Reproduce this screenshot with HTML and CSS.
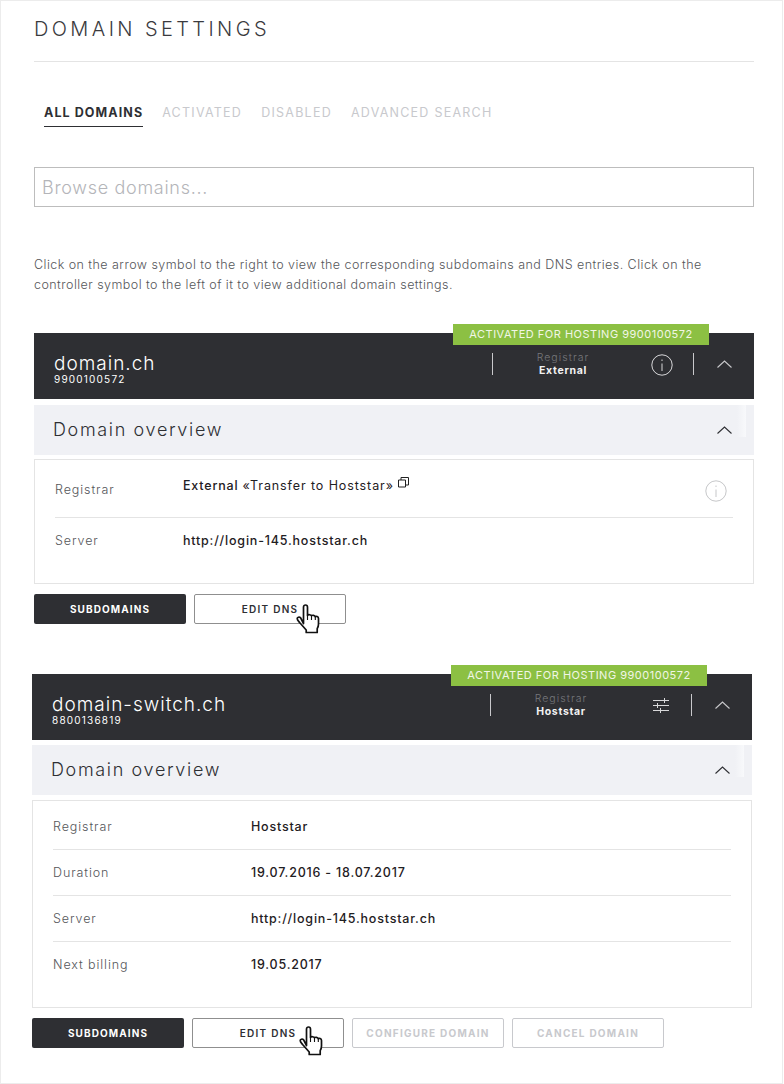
FILE: index.html
```html
<!DOCTYPE html>
<html lang="en">
<head>
<meta charset="utf-8">
<title>Domain settings</title>
<link rel="stylesheet" href="styles.css">
</head>
<body>
<svg width="0" height="0" class="defs">
  <symbol id="hand" viewBox="0 0 24 30">
    <path d="M7.5 19.5V3.2C7.5 1.9 8.4 1 9.5 1s2 .9 2 2.2V11.5c.4-1 3.6-1.2 4 .4.6-1 3.4-.9 3.8.8.8-.6 3.2-.4 3.2 1.8V20c0 2-.6 3.4-1.3 4.6V28.5H10.2V26L3.6 18.5C2.8 17.4 1.2 16.2 1.2 14.6c0-1.4 2-1.9 3.3-.9z" fill="#fff" stroke="#111" stroke-width="1.7" stroke-linejoin="round"/>
    <path d="M11.5 11.5V16M15.5 12V16M19.3 12.8V16" fill="none" stroke="#111" stroke-width="1.1"/>
  </symbol>
</svg>
<main class="page">
  <h1 class="title">DOMAIN SETTINGS</h1>
  <nav class="tabs">
    <a class="tab tab-active">ALL DOMAINS</a>
    <a class="tab">ACTIVATED</a>
    <a class="tab">DISABLED</a>
    <a class="tab">ADVANCED SEARCH</a>
  </nav>
  <div class="search">Browse domains...</div>
  <p class="intro">Click on the arrow symbol to the right to view the corresponding subdomains and DNS entries. Click on the controller symbol to the left of it to view additional domain settings.</p>

  <section class="card">
    <header class="card-head">
      <span class="tag">ACTIVATED FOR HOSTING 9900100572</span>
      <div class="domain"><div class="domain-name">domain.ch</div><div class="domain-id">9900100572</div></div>
      <div class="divider"></div>
      <div class="registrar"><div class="registrar-label">Registrar</div><div class="registrar-value">External</div></div>
      <div class="head-icon">
        <svg width="22" height="22" viewBox="0 0 22 22" fill="none" stroke="#d8d8da"><circle cx="11" cy="11" r="10.2"/><path d="M11 9.5V17M11 5.5V7"/></svg>
      </div>
      <div class="divider"></div>
      <svg class="chev" width="15" height="8" viewBox="0 0 15 8" fill="none" stroke="#c9c9cc" stroke-width="1.1"><path d="M.5 7.5L7.5 1l7 6.5"/></svg>
    </header>
    <div class="overview">
      <span class="overview-title">Domain overview</span>
      <svg class="chev" width="15" height="8" viewBox="0 0 15 8" fill="none" stroke="#2e2f33" stroke-width="1.1"><path d="M.5 7.5L7.5 1l7 6.5"/></svg>
      <span class="sheen"></span>
    </div>
    <div class="details details-short">
      <div class="row row-first">
        <span class="row-label">Registrar</span>
        <span class="row-value row-value-up">External <span class="row-link">«Transfer to Hoststar»</span><svg class="ext" width="11" height="11" viewBox="0 0 11 11" fill="none" stroke="#222"><path d="M.5 3h7v7h-7zM3 3V.5h7.5V8H8"/></svg></span>
        <svg class="row-info" width="22" height="22" viewBox="0 0 22 22" fill="none" stroke="#c6c7c9"><circle cx="11" cy="11" r="10.2"/><path d="M11 9.5V17M11 5.5V7"/></svg>
      </div>
      <div class="row row-last">
        <span class="row-label">Server</span>
        <span class="row-value">http://login-145.hoststar.ch</span>
      </div>
    </div>
    <div class="actions">
      <button class="btn btn-dark">SUBDOMAINS</button>
      <button class="btn btn-line">EDIT DNS<svg class="hand" width="24" height="30"><use href="#hand"/></svg></button>
    </div>
  </section>

  <section class="card card-second">
    <header class="card-head">
      <span class="tag">ACTIVATED FOR HOSTING 9900100572</span>
      <div class="domain"><div class="domain-name">domain-switch.ch</div><div class="domain-id">8800136819</div></div>
      <div class="divider"></div>
      <div class="registrar"><div class="registrar-label">Registrar</div><div class="registrar-value">Hoststar</div></div>
      <div class="head-icon">
        <svg class="sliders" width="16" height="15" viewBox="0 0 16 15" fill="none" stroke="#d8d8da"><path d="M0 2.5h16M0 7.5h16M0 12.5h16M11.5 0v5M4.5 5v5M7.5 10v5"/></svg>
      </div>
      <div class="divider"></div>
      <svg class="chev" width="15" height="8" viewBox="0 0 15 8" fill="none" stroke="#c9c9cc" stroke-width="1.1"><path d="M.5 7.5L7.5 1l7 6.5"/></svg>
    </header>
    <div class="overview">
      <span class="overview-title">Domain overview</span>
      <svg class="chev" width="15" height="8" viewBox="0 0 15 8" fill="none" stroke="#2e2f33" stroke-width="1.1"><path d="M.5 7.5L7.5 1l7 6.5"/></svg>
      <span class="sheen"></span>
    </div>
    <div class="details">
      <div class="row"><span class="row-label">Registrar</span><span class="row-value">Hoststar</span></div>
      <div class="row"><span class="row-label">Duration</span><span class="row-value">19.07.2016 - 18.07.2017</span></div>
      <div class="row"><span class="row-label">Server</span><span class="row-value">http://login-145.hoststar.ch</span></div>
      <div class="row"><span class="row-label">Next billing</span><span class="row-value">19.05.2017</span></div>
    </div>
    <div class="actions">
      <button class="btn btn-dark">SUBDOMAINS</button>
      <button class="btn btn-line">EDIT DNS<svg class="hand" width="24" height="30"><use href="#hand"/></svg></button>
      <button class="btn btn-off">CONFIGURE DOMAIN</button>
      <button class="btn btn-off">CANCEL DOMAIN</button>
    </div>
  </section>
</main>
</body>
</html>
```
FILE: styles.css
```css
* { box-sizing: border-box; }
html, body { margin: 0; padding: 0; background: #fff; }
body { font-family: Inter, "Liberation Sans", sans-serif; color: #2e2f33; }
.defs { position: absolute; }
.page { width: 783px; height: 1084px; padding: 0 28px 0 34px; border: 1px solid #ececec; overflow: hidden; }
.title { margin: 0 0 0 -1px; width: 720px; height: 61px; padding-top: 16px; border-bottom: 1px solid #e4e4e4; font-size: 20px; line-height: 24px; font-weight: 300; letter-spacing: 3.4px; color: #3a3a3e; }
.tabs { display: flex; gap: 19px; margin: 41px 0 0 9px; height: 24px; }
.tab { font-size: 12.5px; line-height: 20px; letter-spacing: 1.25px; color: #c8c9cd; height: 24px; }
.tab-active { font-weight: 700; letter-spacing: 1.08px; color: #2e2f33; border-bottom: 1px solid #2e2f33; }
.search { width: 720px; height: 40px; margin: 40px 0 0 -1px; border: 1px solid #bdbdbd; padding: 0 7px; font-size: 18px; line-height: 40px; font-weight: 300; letter-spacing: .7px; color: #b4b5b9; }
.intro { width: 700px; margin: 48px 0 0 -1px; font-size: 12.5px; line-height: 20px; font-weight: 300; letter-spacing: .45px; color: #55565a; }
.card { width: 720px; margin: 38px 0 0 -1px; }
.card-second { margin: 50px 0 0 -3px; }
.card-head { position: relative; display: flex; align-items: center; height: 66px; padding-left: 20px; background: #2e2f33; color: #fff; }
.tag { position: absolute; top: -9px; right: 45px; width: 256px; height: 21px; background: #8cc043; color: #f1f6e6; font-size: 11px; line-height: 21px; letter-spacing: .5px; text-align: center; }
.domain { flex: 1; margin-top: 7px; }
.domain-name { font-size: 19px; line-height: 19px; font-weight: 300; letter-spacing: 1px; }
.domain-id { font-size: 10px; line-height: 12px; letter-spacing: 1.2px; }
.divider { width: 1px; height: 22px; background: #c9c9cc; margin-top: -4px; }
.registrar { width: 142px; padding-right: 2px; text-align: center; font-size: 10.5px; line-height: 13px; letter-spacing: 1.05px; margin-top: -5px; }
.registrar-label { color: #77787c; font-weight: 300; }
.registrar-value { font-weight: 700; color: #f2f2f2; letter-spacing: .7px; }
.head-icon { width: 58px; display: flex; justify-content: flex-start; padding-left: 16px; margin-top: -3px; }
.sliders { margin-left: 4px; }
.chev { flex: none; margin: -4px 22px 0 23px; }
.overview { position: relative; display: flex; align-items: center; justify-content: space-between; height: 50px; margin-top: 6px; padding-left: 19px; background: #f0f1f5; }
.card-second .overview { margin-top: 5px; }
.overview .chev { margin: 0 22px 0 0; }
.overview-title { font-size: 18px; line-height: 50px; font-weight: 300; letter-spacing: 1.65px; color: #2e2f33; }
.card-second .overview-title { line-height: 52px; }
.sheen { position: absolute; top: 0; right: 8px; width: 9px; height: 32px; background: linear-gradient(to right, #f0f1f5, #f8f9fb); }
.details { margin-top: 4px; border: 1px solid #e4e4e4; padding: 3px 20px 19px; }
.card-second .details { margin-top: 5px; }
.card-second .row:last-child { padding-bottom: 1px; }
.details-short { padding: 0 20px 21px; }
.row { display: flex; align-items: center; height: 46px; border-bottom: 1px solid #e4e4e4; font-size: 12.5px; }
.row:last-child { border-bottom: 0; }
.row-first { position: relative; height: 58px; }
.row-last { height: 44px; }
.row-label { width: 198px; font-weight: 300; letter-spacing: .9px; color: #55565a; }
.details-short .row-label { width: 128px; }
.row-first .row-label { margin-top: 2px; }
.row-value { color: #1f2023; font-weight: 500; letter-spacing: .8px; }
.row-value-up { margin-top: -8px; }
.row-link { font-weight: 400; letter-spacing: .9px; }
.ext { margin-left: 4px; vertical-align: 2px; }
.row-info { margin-left: auto; margin-right: 6px; margin-top: 5px; }
.actions { display: flex; gap: 8px; margin-top: 10px; }
.btn { position: relative; width: 152px; height: 30px; padding: 0; border-radius: 2px; font-family: inherit; font-size: 10px; font-weight: 700; letter-spacing: 1.25px; background: #fff; }
.btn-dark { background: #2e2f33; border: 0; color: #fff; letter-spacing: 1.1px; }
.btn-line { border: 1px solid #8f8f8f; color: #2e2f33; font-weight: 600; }
.btn-off { border: 1px solid #c8c9cd; color: #c8c9cd; }
.hand { position: absolute; left: 101px; top: 9px; }
.card-second .hand { left: 106px; top: 7px; }
```
